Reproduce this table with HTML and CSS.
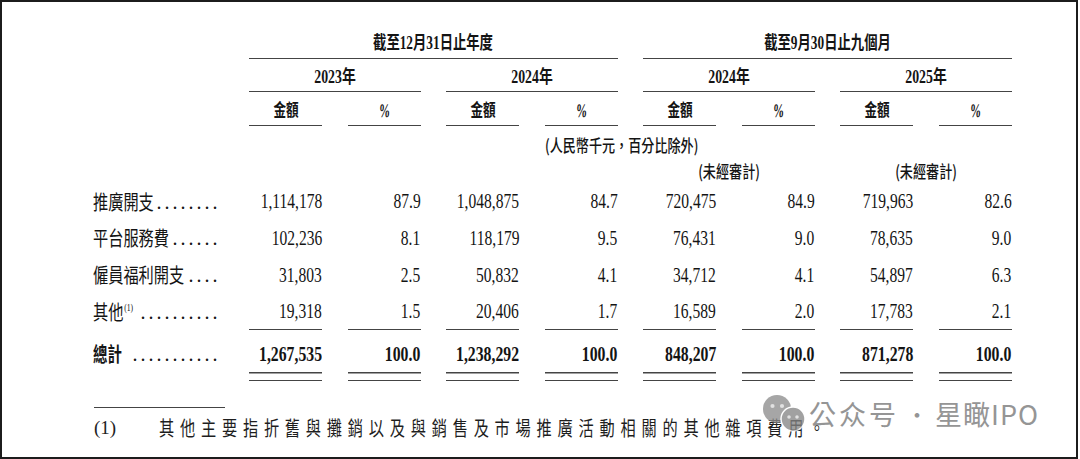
FILE: index.html
```html
<!DOCTYPE html>
<html lang="zh-Hant">
<head>
<meta charset="utf-8">
<title>開支明細</title>
<link rel="stylesheet" href="styles.css">
</head>
<body>
<div class="page">
  <div class="table">
    <div class="row rh1">
      <div class="cell hd ttl g-a"><span class="t">截至12月31日止年度</span></div>
      <div class="cell hd ttl g-b"><span class="t">截至9月30日止九個月</span></div>
    </div>
    <div class="row rh2">
      <div class="cell hd y1"><span class="t">2023年</span></div>
      <div class="cell hd y2"><span class="t">2024年</span></div>
      <div class="cell hd y3"><span class="t">2024年</span></div>
      <div class="cell hd y4"><span class="t">2025年</span></div>
    </div>
    <div class="row rh3">
      <div class="cell hd sub c2"><span class="t">金額</span></div>
      <div class="cell hd sub pct"><span class="t">%</span></div>
      <div class="cell hd sub"><span class="t">金額</span></div>
      <div class="cell hd sub pct"><span class="t">%</span></div>
      <div class="cell hd sub"><span class="t">金額</span></div>
      <div class="cell hd sub pct"><span class="t">%</span></div>
      <div class="cell hd sub"><span class="t">金額</span></div>
      <div class="cell hd sub pct"><span class="t">%</span></div>
    </div>
    <div class="row rh4">
      <div class="cell note unit"><span class="t">(人民幣千元，百分比除外)</span></div>
    </div>
    <div class="row rh5">
      <div class="cell note aud a1"><span class="t">(未經審計)</span></div>
      <div class="cell note aud a2"><span class="t">(未經審計)</span></div>
    </div>

    <div class="row rd">
      <div class="cell lbl"><span class="nm"><span class="t">推廣開支</span></span><span class="dots">........</span></div>
      <div class="cell num"><span class="t">1,114,178</span></div>
      <div class="cell num"><span class="t">87.9</span></div>
      <div class="cell num"><span class="t">1,048,875</span></div>
      <div class="cell num"><span class="t">84.7</span></div>
      <div class="cell num"><span class="t">720,475</span></div>
      <div class="cell num"><span class="t">84.9</span></div>
      <div class="cell num"><span class="t">719,963</span></div>
      <div class="cell num"><span class="t">82.6</span></div>
    </div>
    <div class="row rd">
      <div class="cell lbl"><span class="nm"><span class="t">平台服務費</span></span><span class="dots">......</span></div>
      <div class="cell num"><span class="t">102,236</span></div>
      <div class="cell num"><span class="t">8.1</span></div>
      <div class="cell num"><span class="t">118,179</span></div>
      <div class="cell num"><span class="t">9.5</span></div>
      <div class="cell num"><span class="t">76,431</span></div>
      <div class="cell num"><span class="t">9.0</span></div>
      <div class="cell num"><span class="t">78,635</span></div>
      <div class="cell num"><span class="t">9.0</span></div>
    </div>
    <div class="row rd">
      <div class="cell lbl"><span class="nm"><span class="t">僱員福利開支</span></span><span class="dots">....</span></div>
      <div class="cell num"><span class="t">31,803</span></div>
      <div class="cell num"><span class="t">2.5</span></div>
      <div class="cell num"><span class="t">50,832</span></div>
      <div class="cell num"><span class="t">4.1</span></div>
      <div class="cell num"><span class="t">34,712</span></div>
      <div class="cell num"><span class="t">4.1</span></div>
      <div class="cell num"><span class="t">54,897</span></div>
      <div class="cell num"><span class="t">6.3</span></div>
    </div>
    <div class="row rd last">
      <div class="cell lbl"><span class="nm"><span class="t">其他<sup class="sup">(1)</sup></span></span><span class="dots">..........</span></div>
      <div class="cell num"><span class="t">19,318</span></div>
      <div class="cell num"><span class="t">1.5</span></div>
      <div class="cell num"><span class="t">20,406</span></div>
      <div class="cell num"><span class="t">1.7</span></div>
      <div class="cell num"><span class="t">16,589</span></div>
      <div class="cell num"><span class="t">2.0</span></div>
      <div class="cell num"><span class="t">17,783</span></div>
      <div class="cell num"><span class="t">2.1</span></div>
    </div>
    <div class="row rt">
      <div class="cell lbl tot"><span class="nm"><span class="t">總計</span></span><span class="dots">...........</span></div>
      <div class="cell num tot"><span class="t">1,267,535</span></div>
      <div class="cell num tot"><span class="t">100.0</span></div>
      <div class="cell num tot"><span class="t">1,238,292</span></div>
      <div class="cell num tot"><span class="t">100.0</span></div>
      <div class="cell num tot"><span class="t">848,207</span></div>
      <div class="cell num tot"><span class="t">100.0</span></div>
      <div class="cell num tot"><span class="t">871,278</span></div>
      <div class="cell num tot"><span class="t">100.0</span></div>
    </div>
  </div>

  <div class="fn-rule"></div>
  <div class="fn">
    <span class="fn-no">(1)</span>
    <span class="fn-tx"><span class="t">其他主要指折舊與攤銷以及與銷售及市場推廣活動相關的其他雜項費用。</span></span>
  </div>

  <div class="wm">
    <svg class="wm-icon" width="50" height="38" viewBox="0 0 50 38" aria-hidden="true">
      <circle cx="20" cy="15" r="14" fill="#8c8c8c"/>
      <circle cx="15.5" cy="12" r="2.1" fill="#d9d9d9"/>
      <circle cx="25" cy="12" r="2.1" fill="#d9d9d9"/>
      <circle cx="36" cy="25" r="12" fill="#858585" stroke="#ffffff" stroke-width="1.5"/>
      <circle cx="32" cy="23" r="1.8" fill="#d9d9d9"/>
      <circle cx="40" cy="23" r="1.8" fill="#d9d9d9"/>
    </svg>
    <span class="wm-a">公众号</span><span class="wm-dot">·</span><span class="wm-b">星瞰IPO</span>
  </div>
</div>
</body>
</html>
```

FILE: styles.css
```css
* {
  box-sizing: border-box;
  margin: 0;
  padding: 0;
}

body {
  margin: 0;
  background: #ffffff;
}

.page {
  position: relative;
  width: 1078px;
  height: 459px;
  border: 2px solid #1c1c1c;
  padding: 22px 0 0 91px;
  color: #141414;
  font-family: "Liberation Serif", "Noto Sans CJK TC", serif;
  overflow: hidden;
  background: #ffffff;
}

/* ---------- table grid ---------- */
.row {
  display: grid;
  grid-template-columns: 130.5px repeat(8, 73px);
  column-gap: 25.5px;
}

.rh1 { height: 35px; }
.rh2 { height: 33px; }
.rh3 { height: 34px; }
.rh4 { height: 32px; }
.rh5 { height: 25.3px; }
.rd  { height: 36.7px; }
.rt  { height: 51px; }

.cell {
  display: flex;
  align-items: center;
  justify-content: flex-end;
  white-space: nowrap;
  min-width: 0;
  line-height: 1;
}

.t {
  display: inline-block;
  flex-shrink: 0;
  white-space: nowrap;
  transform: scaleX(0.77);
  transform-origin: right center;
}

/* ---------- header ---------- */
.hd {
  justify-content: center;
  border-bottom: 1.5px solid #444444;
  font-weight: 700;
  font-size: 18px;
  padding-top: 4.5px;
}

.hd .t { transform-origin: center center; }

.ttl .t { transform: scaleX(0.74); }

.g-a { grid-column: 2 / 6; }
.g-b { grid-column: 6 / 10; }

.y1 { grid-column: 2 / 4; }
.y2 { grid-column: 4 / 6; }
.y3 { grid-column: 6 / 8; }
.y4 { grid-column: 8 / 10; }

.sub {
  font-size: 17px;
  padding-top: 3.5px;
}

.sub .t { transform: scaleX(0.74); }

.pct {
  font-size: 19px;
  font-weight: 700;
}

.pct .t { transform: scaleX(0.6) skewX(-6deg); }

.c2 { grid-column: 2; }

.note {
  font-family: "Noto Sans CJK TC", sans-serif;
  font-size: 17px;
  font-weight: 500;
}

.unit {
  grid-column: 5 / 8;
  justify-content: flex-start;
  padding-top: 4px;
}

.unit .t { transform-origin: left center; }

.aud { justify-content: center; }
.aud .t { transform-origin: center center; }
.a1 { grid-column: 6 / 8; }
.a2 { grid-column: 8 / 10; }

/* ---------- body rows ---------- */
.lbl {
  justify-content: flex-start;
  font-family: "Noto Sans CJK TC", sans-serif;
  font-size: 20px;
}

.nm {
  flex: 1 1 0;
  min-width: 0;
}

.nm .t {
  transform: scaleX(0.76);
  transform-origin: left center;
}

.sup {
  font-family: "Liberation Serif", serif;
  font-size: 10px;
  vertical-align: 9px;
  margin-left: 1px;
}

.dots {
  flex-shrink: 0;
  font-family: "Liberation Serif", serif;
  font-size: 20px;
  letter-spacing: 3px;
  margin-right: 3px;
}

.num {
  font-size: 21px;
}

.num .t { transform: scaleX(0.74); }

.last .num {
  border-bottom: 1.5px solid #444444;
}

.tot {
  font-weight: 700;
  align-items: flex-start;
  padding-top: 14px;
}

.lbl.tot .nm .t { transform: scaleX(0.72); }

.lbl.tot .dots { font-weight: 400; }

.num.tot .t { transform: scaleX(0.75); }

.num.tot {
  background-image:
    linear-gradient(#444444, #444444),
    linear-gradient(#444444, #444444);
  background-repeat: no-repeat;
  background-size: 100% 1.5px, 100% 1.5px;
  background-position: 0 calc(100% - 7.5px), 0 100%;
}

/* ---------- footnote ---------- */
.fn-rule {
  width: 131px;
  margin: 25.5px 0 0 1px;
  border-top: 1.2px solid #444444;
}

.fn {
  display: flex;
  align-items: center;
  height: 40px;
  margin-left: 1px;
  color: #1e1e1e;
}

.fn-no {
  width: 65px;
  flex-shrink: 0;
  font-family: "Liberation Serif", serif;
  font-size: 19px;
}

.fn-tx {
  flex: 1 1 0;
  min-width: 0;
  white-space: nowrap;
}

.fn-tx .t {
  font-family: "Noto Sans CJK TC", sans-serif;
  font-size: 20px;
  letter-spacing: 7.6px;
  transform: scaleX(0.76);
  transform-origin: left center;
}

/* ---------- watermark ---------- */
.wm {
  position: absolute;
  left: 755px;
  top: 392px;
  display: flex;
  align-items: center;
  height: 38px;
  color: #8a8a8a;
  opacity: 0.9;
  font-family: "Noto Sans CJK SC", sans-serif;
  font-size: 27px;
  line-height: 1;
  white-space: nowrap;
}

.wm-icon {
  flex-shrink: 0;
  margin-right: 2px;
  opacity: 0.85;
}

.wm-a { letter-spacing: 3px; }

.wm-dot {
  display: inline-block;
  width: 36px;
  text-align: center;
  font-size: 22px;
}

.wm-b { letter-spacing: 1px; }
```
